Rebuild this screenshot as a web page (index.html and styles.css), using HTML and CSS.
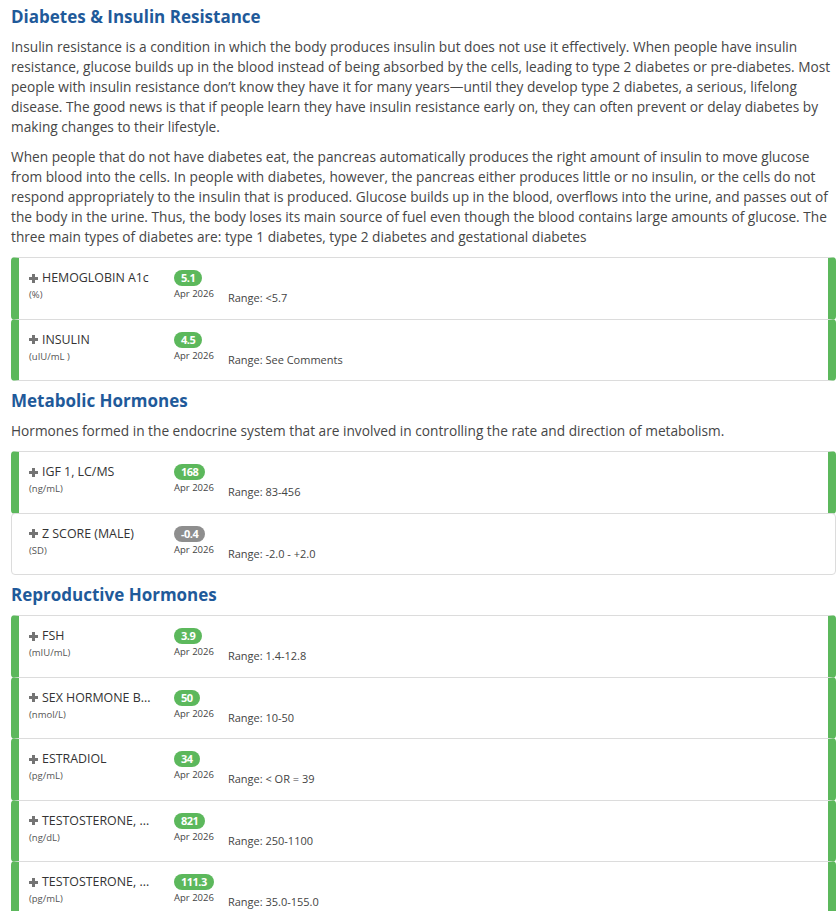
FILE: index.html
```html
<!DOCTYPE html>
<html lang="en">
<head>
    <meta charset="UTF-8">
    <meta name="viewport" content="width=device-width, initial-scale=1.0">
    <title>Lab Results - Hormones</title>
    <link rel="stylesheet" href="styles.css">
</head>
<body>
    <div class="page">
        <h2 class="section-title">Diabetes &amp; Insulin Resistance</h2>
        <p class="section-text">Insulin resistance is a condition in which the body produces insulin but does not use it effectively. When people have insulin resistance, glucose builds up in the blood instead of being absorbed by the cells, leading to type 2 diabetes or pre-diabetes. Most people with insulin resistance don&rsquo;t know they have it for many years&mdash;until they develop type 2 diabetes, a serious, lifelong disease. The good news is that if people learn they have insulin resistance early on, they can often prevent or delay diabetes by making changes to their lifestyle.</p>
        <p class="section-text">When people that do not have diabetes eat, the pancreas automatically produces the right amount of insulin to move glucose from blood into the cells. In people with diabetes, however, the pancreas either produces little or no insulin, or the cells do not respond appropriately to the insulin that is produced. Glucose builds up in the blood, overflows into the urine, and passes out of the body in the urine. Thus, the body loses its main source of fuel even though the blood contains large amounts of glucose. The three main types of diabetes are: type 1 diabetes, type 2 diabetes and gestational diabetes</p>

        <div class="results">
            <div class="result in-range">
                <div class="name-col">
                    <div class="test-name"><svg class="plus" width="9" height="9" viewBox="0 0 9 9"><rect x="3" y="0" width="3" height="9" fill="#747474"/><rect x="0" y="3" width="9" height="3" fill="#747474"/></svg>HEMOGLOBIN A1c</div>
                    <div class="test-unit">(%)</div>
                </div>
                <div class="val-col">
                    <span class="badge">5.1</span>
                    <div class="test-date">Apr 2026</div>
                </div>
                <div class="test-range">Range: &lt;5.7</div>
            </div>
            <div class="result in-range">
                <div class="name-col">
                    <div class="test-name"><svg class="plus" width="9" height="9" viewBox="0 0 9 9"><rect x="3" y="0" width="3" height="9" fill="#747474"/><rect x="0" y="3" width="9" height="3" fill="#747474"/></svg>INSULIN</div>
                    <div class="test-unit">(uIU/mL )</div>
                </div>
                <div class="val-col">
                    <span class="badge">4.5</span>
                    <div class="test-date">Apr 2026</div>
                </div>
                <div class="test-range">Range: See Comments</div>
            </div>
        </div>

        <h2 class="section-title">Metabolic Hormones</h2>
        <p class="section-text">Hormones formed in the endocrine system that are involved in controlling the rate and direction of metabolism.</p>

        <div class="results">
            <div class="result in-range">
                <div class="name-col">
                    <div class="test-name"><svg class="plus" width="9" height="9" viewBox="0 0 9 9"><rect x="3" y="0" width="3" height="9" fill="#747474"/><rect x="0" y="3" width="9" height="3" fill="#747474"/></svg>IGF 1, LC/MS</div>
                    <div class="test-unit">(ng/mL)</div>
                </div>
                <div class="val-col">
                    <span class="badge">168</span>
                    <div class="test-date">Apr 2026</div>
                </div>
                <div class="test-range">Range: 83-456</div>
            </div>
            <div class="result">
                <div class="name-col">
                    <div class="test-name"><svg class="plus" width="9" height="9" viewBox="0 0 9 9"><rect x="3" y="0" width="3" height="9" fill="#747474"/><rect x="0" y="3" width="9" height="3" fill="#747474"/></svg>Z SCORE (MALE)</div>
                    <div class="test-unit">(SD)</div>
                </div>
                <div class="val-col">
                    <span class="badge badge-grey">-0.4</span>
                    <div class="test-date">Apr 2026</div>
                </div>
                <div class="test-range">Range: -2.0 - +2.0</div>
            </div>
        </div>

        <h2 class="section-title">Reproductive Hormones</h2>

        <div class="results">
            <div class="result in-range">
                <div class="name-col">
                    <div class="test-name"><svg class="plus" width="9" height="9" viewBox="0 0 9 9"><rect x="3" y="0" width="3" height="9" fill="#747474"/><rect x="0" y="3" width="9" height="3" fill="#747474"/></svg>FSH</div>
                    <div class="test-unit">(mIU/mL)</div>
                </div>
                <div class="val-col">
                    <span class="badge">3.9</span>
                    <div class="test-date">Apr 2026</div>
                </div>
                <div class="test-range">Range: 1.4-12.8</div>
            </div>
            <div class="result in-range">
                <div class="name-col">
                    <div class="test-name"><svg class="plus" width="9" height="9" viewBox="0 0 9 9"><rect x="3" y="0" width="3" height="9" fill="#747474"/><rect x="0" y="3" width="9" height="3" fill="#747474"/></svg>SEX HORMONE B...</div>
                    <div class="test-unit">(nmol/L)</div>
                </div>
                <div class="val-col">
                    <span class="badge">50</span>
                    <div class="test-date">Apr 2026</div>
                </div>
                <div class="test-range">Range: 10-50</div>
            </div>
            <div class="result in-range">
                <div class="name-col">
                    <div class="test-name"><svg class="plus" width="9" height="9" viewBox="0 0 9 9"><rect x="3" y="0" width="3" height="9" fill="#747474"/><rect x="0" y="3" width="9" height="3" fill="#747474"/></svg>ESTRADIOL</div>
                    <div class="test-unit">(pg/mL)</div>
                </div>
                <div class="val-col">
                    <span class="badge">34</span>
                    <div class="test-date">Apr 2026</div>
                </div>
                <div class="test-range">Range: &lt; OR = 39</div>
            </div>
            <div class="result in-range">
                <div class="name-col">
                    <div class="test-name"><svg class="plus" width="9" height="9" viewBox="0 0 9 9"><rect x="3" y="0" width="3" height="9" fill="#747474"/><rect x="0" y="3" width="9" height="3" fill="#747474"/></svg>TESTOSTERONE, ...</div>
                    <div class="test-unit">(ng/dL)</div>
                </div>
                <div class="val-col">
                    <span class="badge">821</span>
                    <div class="test-date">Apr 2026</div>
                </div>
                <div class="test-range">Range: 250-1100</div>
            </div>
            <div class="result in-range">
                <div class="name-col">
                    <div class="test-name"><svg class="plus" width="9" height="9" viewBox="0 0 9 9"><rect x="3" y="0" width="3" height="9" fill="#747474"/><rect x="0" y="3" width="9" height="3" fill="#747474"/></svg>TESTOSTERONE, ...</div>
                    <div class="test-unit">(pg/mL)</div>
                </div>
                <div class="val-col">
                    <span class="badge">111.3</span>
                    <div class="test-date">Apr 2026</div>
                </div>
                <div class="test-range">Range: 35.0-155.0</div>
            </div>
        </div>
    </div>
</body>
</html>
```
FILE: styles.css
```css
body { margin: 0; font-family: "Open Sans", "Liberation Sans", sans-serif; color: #464646; background: #fff; }
.page { padding: 5px 4px 0 11px; }

.section-title {
    margin: 0;
    font-size: 17px;
    line-height: 24px;
    font-weight: 700;
    color: #1f5a9a;
}
.section-text {
    margin: 8px 0 10px;
    font-size: 13.7px;
    line-height: 20px;
}
.section-text + .section-text { margin-top: 10px; }

.results { margin: 10px 0 8px; }
.section-title + .results { margin-top: 8px; }

.result {
    display: flex;
    align-items: flex-start;
    height: 62.5px;
    box-sizing: border-box;
    margin-top: -1px;
    padding: 10px 10px 0 17px;
    border: 1px solid #dcdcdc;
    border-radius: 4px;
    background: #fff;
}
.result:first-child { margin-top: 0; }
.result.in-range {
    border-left: 8px solid #5cb85c;
    border-right: 8px solid #5cb85c;
    padding-left: 10px;
}

.name-col { width: 145px; flex: none; }
.test-name {
    font-size: 12.4px;
    line-height: 20px;
    color: #333;
    white-space: nowrap;
}
.plus { margin-right: 4px; vertical-align: -0.5px; }
.test-unit {
    font-size: 9.5px;
    line-height: 14px;
    color: #555;
}

.val-col {
    display: flex;
    flex-direction: column;
    align-items: flex-start;
    margin-top: 2px;
    flex: none;
}
.badge {
    display: inline-block;
    height: 16px;
    line-height: 16px;
    padding: 0 7px;
    border-radius: 8px;
    background: #5cb85c;
    color: #fff;
    font-size: 11px;
    font-weight: 700;
    letter-spacing: -0.5px;
}
.badge-grey { background: #8e8e8e; }
.test-date {
    margin-top: 1px;
    font-size: 9.5px;
    line-height: 14px;
    color: #444;
}

.test-range {
    margin: 22px 0 0 14px;
    font-size: 11px;
    line-height: 16px;
    color: #444;
}
```
